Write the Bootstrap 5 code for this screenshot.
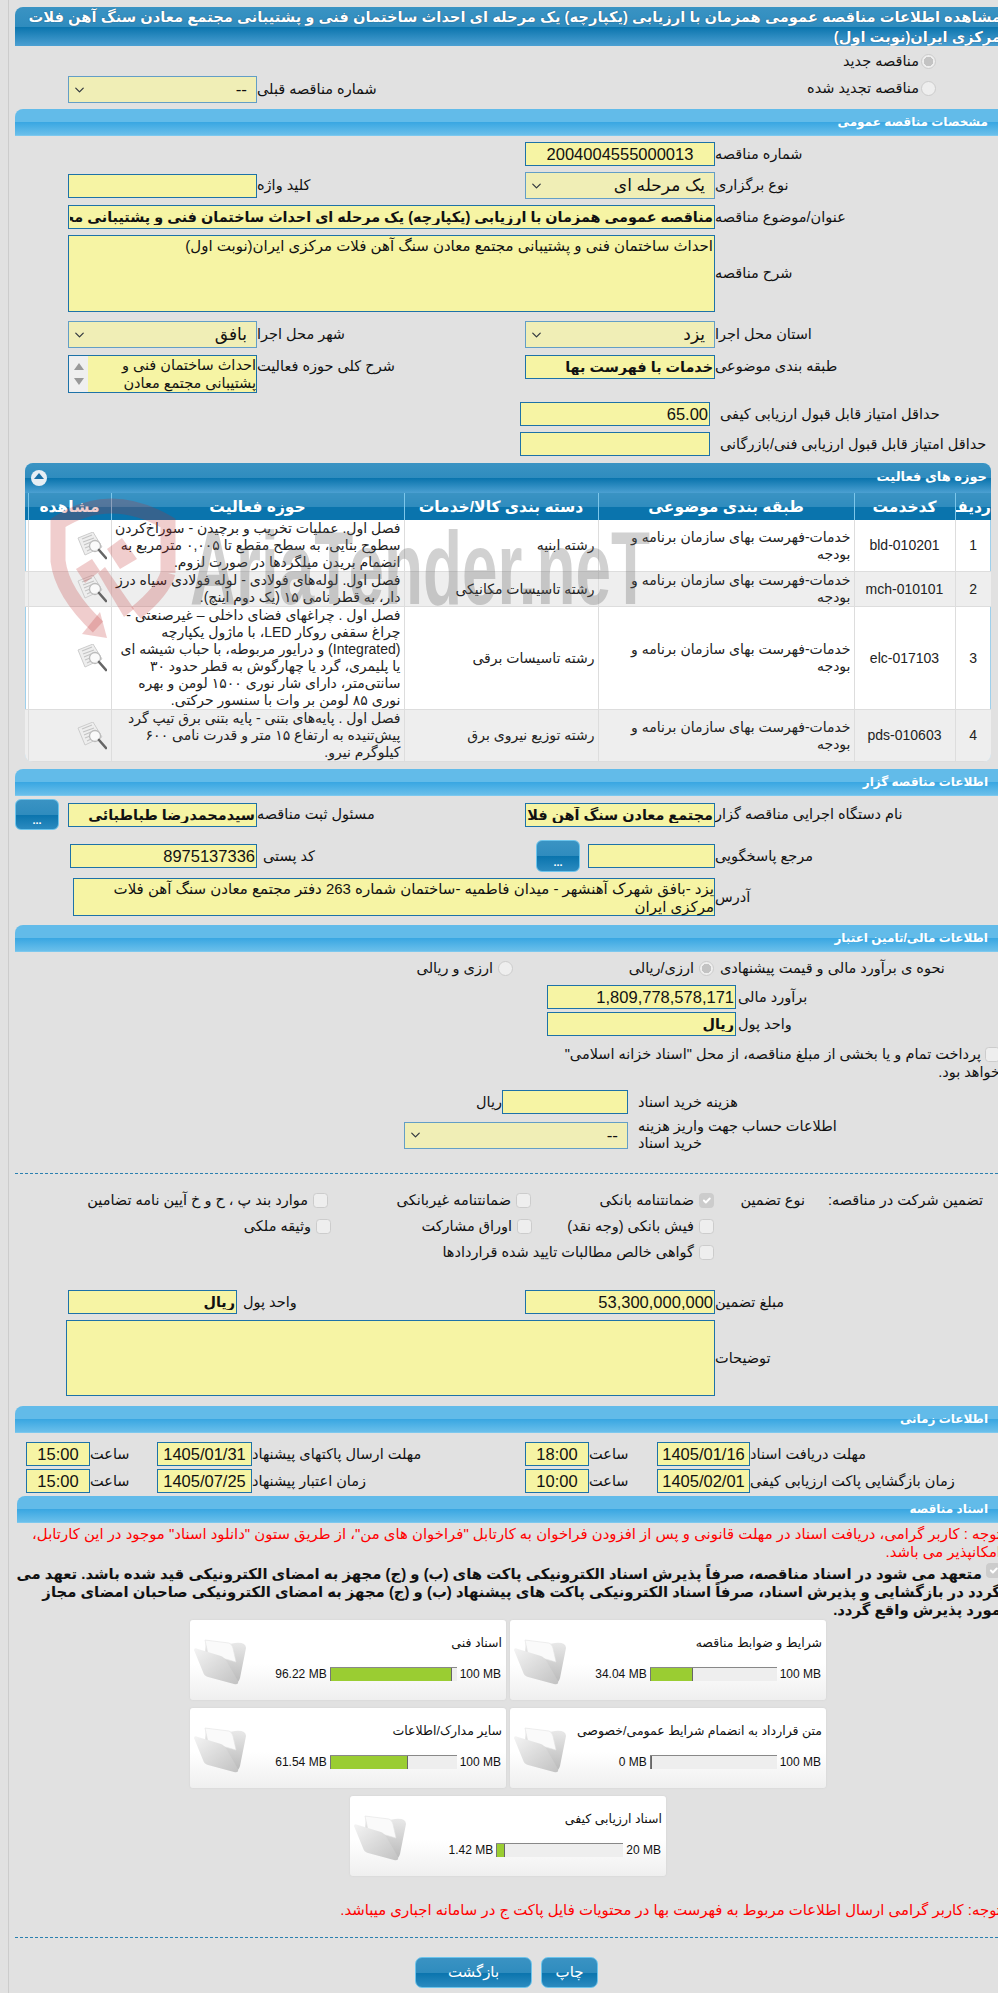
<!DOCTYPE html>
<html lang="fa" dir="rtl">
<head>
<meta charset="utf-8">
<title>مشاهده اطلاعات مناقصه</title>
<link rel="stylesheet" href="https://cdn.jsdelivr.net/npm/bootstrap@5.3.0/dist/css/bootstrap.min.css">
<style>
html{overflow:hidden}
body{background:#e1e1e1 linear-gradient(to right,#e1e1e1 8px,#ccc 8px,#ccc 9px,#e1e1e1 9px);font-family:"Liberation Sans","DejaVu Sans",sans-serif;font-size:14.5px;line-height:17px;color:#111;padding:7px 0 0 15px;margin:0;width:998px;height:1993px;overflow:hidden}
.hd-main{height:39px;background:linear-gradient(#3a93c3 0,#2f8cbe 50%,#0a74ad 51%,#4ca0d2 100%);border-radius:8px 0 0 0;color:#fff;font-size:14.7px;line-height:20px;font-weight:bold;margin-right:-3px;overflow:hidden;text-shadow:0 0 1px #135}
.hd-sec{height:27px;background:linear-gradient(#62bbe9 0,#62bbe9 48%,#3aa7e2 50%,#6ec1eb 100%);border-radius:8px 0 0 0;color:#fff;font-size:12px;font-weight:bold;line-height:27px;padding-right:10px;box-shadow:inset 0 -1px 0 #7cc8ee}
.g{display:grid;grid-template-columns:283px 190px 268px 189px;align-items:center}
.lb{text-align:left}
.fld.form-control,.fsel.form-select{border-radius:0;box-shadow:none;font-family:"Liberation Sans","DejaVu Sans",sans-serif;color:#111}
.fld.form-control{height:24px;min-height:0;padding:0 1px;background:#f6f4a4;border:1px solid #1d72a8;font-size:16.5px;line-height:20px}
.fsel.form-select{height:27px;padding:0 9px 0 22px;background-color:#f0eeb6;background-position:left 4px center;background-size:13px 10px;border:1px solid #639ec6;font-size:17px;opacity:1}
.fld.bd{font-weight:bold;font-size:14.4px}
.ctr{text-align:center}
.num{text-align:right}
.fld.ar{height:auto;resize:none;font-size:15px;padding:1px;line-height:18px}
.chk{width:15px;height:15px;margin:0;flex:none;background-color:#eee;border:1px solid #ccc;opacity:1!important;border-radius:4px}
.chk[type=radio]{border-radius:50%}
.chk:checked{background-color:#ccc;border-color:#ccc}
.chk[type=radio]:checked{background:radial-gradient(circle,#c3c3c3 0 4.5px,#eee 5px)}
.ck{display:inline-flex;align-items:center;gap:5px}
.ck2{gap:2px}
.panel{position:relative;width:966px;margin-right:7px;border-radius:8px;overflow:hidden;box-shadow:0 0 0 1px #9ed0ec inset;background:#fff}
.panel-hd{height:30px;background:linear-gradient(#3a93c3 0,#2f8cbe 50%,#0a74ad 51%,#4ca0d2 100%);color:#fff;font-weight:bold;font-size:13px;line-height:28px;padding-right:4px;position:relative}
.tg{position:absolute;left:6px;top:7px;width:16px;height:16px;border-radius:50%;background:#e6eef4}
.tg::after{content:"";position:absolute;left:3px;top:3px;border:5px solid transparent;border-bottom:6px solid #1a6fa6;border-top:0}
.tb.table{margin:0;table-layout:fixed;width:966px;font-size:14px;line-height:17px;--bs-table-bg:transparent;color:#111}
.tb th{height:27px;padding:0;border:0;border-left:1px solid #7cc6ea;background:linear-gradient(#3a93c3 0,#2f8cbe 50%,#0a74ad 51%,#0a74ad 100%);color:#fff;text-align:center;font-size:15.5px;font-weight:bold;vertical-align:middle;white-space:nowrap;overflow:hidden}
.tb th:last-child{border-left:0}
.tb td{padding:0 3px;border:0;border-left:1px solid #ddd;border-bottom:1px solid #ddd;vertical-align:middle;text-align:right;color:#222}
.tb td:last-child{border-left:0}
.tb td.ltr{text-align:center}
.tb tr.alt td{background:#eee}
.tb td.ic{padding:0 4px 0 0}
.wm{position:absolute;left:0;top:0;width:640px;height:180px;pointer-events:none;overflow:visible}
.dbtn{display:flex;align-items:flex-end;justify-content:center;width:44px;height:31px;padding:0 0 3px;border-radius:6px;border:1px solid #6cc4ec;background:linear-gradient(#3a93c3 0,#2f8cbe 50%,#0a74ad 51%,#2b8bc0 100%);color:#fff;font-size:11px;font-weight:bold;line-height:12px}
.addr{height:38px;background:#f6f4a4;border:1px solid #1d72a8;font-size:15px;line-height:18px;padding:1px 0 0 20px}
.lst{height:38px;background:#f6f4a4;border:1px solid #1d72a8;display:flex;overflow:hidden;font-size:14.5px;line-height:18px}
.lst-t{flex:1;padding-left:12px}
.lst-b{width:19px;background:#efefef;display:flex;flex-direction:column;justify-content:space-between;align-items:center;padding:7px 0}
.lst-b i{display:block;border:5px solid transparent;border-bottom:7px solid #999;border-top:0}
.lst-b i+i{border-bottom:0;border-top:7px solid #999}
.tm{display:grid;grid-template-columns:248px 93px 68px 64px 273px 95px 67px 64px;align-items:center}
.gr{display:grid;grid-template-columns:193px 91px 183px 203px 1fr;align-items:center}
.gr2{grid-template-columns:193px 91px 182px 201px 1fr}
.pr15{padding-right:15px}
.fin1{display:grid;grid-template-columns:284px 201px 1fr;align-items:center}
.fin2{display:grid;grid-template-columns:262px 189px;align-items:center}
.fin3{display:grid;grid-template-columns:370px 126px auto;align-items:center;justify-content:start}
.fin4{display:grid;grid-template-columns:370px 224px;align-items:center}
.pl10{padding-left:10px}
.fin4 .nar{justify-self:end;width:210px;text-align:left;margin-left:10px}
.tres{width:458px;margin-right:-2px;line-height:18px}
.tres input{display:inline-block;vertical-align:-3px}
.dash{border-top:1px dashed #2a80b0}
.red{color:#f00;font-size:14.9px;line-height:18px;margin-right:-3px}
.strong{font-weight:bold;font-size:14.85px;line-height:18px;color:#111;margin-right:-3px;margin-top:2px}
.strong input{display:inline-block;vertical-align:1px}
.sec2{margin-left:2px}
.dcards{display:flex;flex-wrap:wrap;justify-content:center;gap:8px 4px;width:640px;margin:1px 170px 0 0}
.dcard{display:flex;width:316px;height:80px;background:linear-gradient(#fff 0,#fff 55%,#efefef 100%);border-radius:3px;box-shadow:0 0 2px #ccc;padding:15px 4px 0 4px}
.dc-m{flex:1}
.dc-t{font-size:12.5px;line-height:17px;height:17px}
.dc-b{display:flex;align-items:center;gap:3px;margin-top:15px;font-size:12px;line-height:14px;padding-right:1px}
.dc-bar{display:block;width:127px;height:14px;background:#eee;border-top:1px solid #888;overflow:hidden;direction:ltr}
.dc-fill{display:block;height:100%;background:#9acd32;border-left:1px solid #777;border-right:1px solid #666}
.dc-f{width:52px;height:47px;margin:3px 0 0 0;flex:none}
.rbtn{display:inline-flex;align-items:center;justify-content:center;height:31px;border-radius:7px;border:1px solid #6cc4ec;background:linear-gradient(#3a93c3 0,#2f8cbe 50%,#0a74ad 51%,#2b8bc0 100%);color:#fff;font-size:15px;padding:0}
.w57{width:57px}.w117{width:117px}
.btns{display:flex;justify-content:center;gap:9px;margin:19px 0 0 0;width:983px}
.t2{margin-top:2px}.t3{margin-top:3px}.t4{margin-top:4px}.t6{margin-top:6px}.t7{margin-top:7px}.t8{margin-top:8px}.t9{margin-top:9px}.t10{margin-top:10px}.t18{margin-top:18px}.t21{margin-top:21px}
.col24{align-self:start}
.lb.col24{padding-top:3px}
.rd-row{height:30px;display:flex;align-items:center;padding-right:62px}
.rd2{padding-right:62px}
</style>
</head>
<body>
<svg width="0" height="0" class="position-absolute">
<defs>
<linearGradient id="fg1" x1="0" y1="0" x2="0" y2="1"><stop offset="0" stop-color="#ececec"/><stop offset="1" stop-color="#b9b9b9"/></linearGradient>
<linearGradient id="fg2" x1="0" y1="0" x2="1" y2="1"><stop offset="0" stop-color="#f4f4f4"/><stop offset="1" stop-color="#c2c2c2"/></linearGradient>
<symbol id="ic-folder" viewBox="0 0 52 47">
<path d="M12 2 L30 7 L41 5 Q52 4 52 10 L46 40 Q44 47 38 44 L10 30Z" fill="url(#fg1)"/>
<path d="M11 2 L35 5 Q38 6 39 10 L42 24 L14 16Z" fill="#fafafa" stroke="#e2e2e2" stroke-width=".6"/>
<path d="M0 12 Q0 9 4 11 L27 18 Q30 19 33 24 L44 43 Q45 47 40 46 L14 39 Q10 38 9 34Z" fill="url(#fg2)"/>
</symbol>
<symbol id="ic-view" viewBox="0 0 30 28">
<path d="M1 6 L16 0 L25 15 L8 23Z" fill="#eee" stroke="#ccc"/>
<path d="M5 7 L15 3 M6 10 L17 6 M7 13 L14 10 M8 16 L13 14 M10 19 L14 17" stroke="#c4c4c4" stroke-width="1.1"/>
<circle cx="18" cy="14" r="5.5" fill="#fdfdfd" fill-opacity=".75" stroke="#bbb" stroke-width="1.3"/>
<path d="M22 18 L29 26" stroke="#666" stroke-width="2.6" stroke-linecap="round"/>
</symbol>
</defs>
</svg>

<div class="hd-main">مشاهده اطلاعات مناقصه عمومی همزمان با ارزیابی (یکپارچه) یک مرحله ای احداث ساختمان فنی و پشتیبانی مجتمع معادن سنگ آهن فلات مرکزی ایران(نوبت اول)</div>

<div class="rd-row"><label class="ck ck2"><input class="form-check-input chk" type="radio" checked disabled>مناقصه جدید</label></div>
<div class="g">
  <div class="rd2" style="grid-column:1/3"><label class="ck ck2"><input class="form-check-input chk" type="radio" disabled>مناقصه تجدید شده</label></div>
  <div class="lb">شماره مناقصه قبلی</div>
  <select class="form-select fsel" disabled><option>--</option></select>
</div>

<div class="hd-sec t6">مشخصات مناقصه عمومی</div>
<div class="g t6">
  <div class="lb">شماره مناقصه</div>
  <input class="form-control fld ctr" value="2004004555000013" readonly>
</div>
<div class="g t6">
  <div class="lb">نوع برگزاری</div>
  <select class="form-select fsel" disabled><option>یک مرحله ای</option></select>
  <div class="lb">کلید واژه</div>
  <input class="form-control fld" readonly>
</div>
<div class="g t6">
  <div class="lb">عنوان/موضوع مناقصه</div>
  <input class="form-control fld bd" style="grid-column:2/5" value="مناقصه عمومی همزمان با ارزیابی (یکپارچه) یک مرحله ای احداث ساختمان فنی و پشتیبانی مجتمع معادن سنگ آهن فلات مرکزی ایران(نوبت اول)" readonly>
</div>
<div class="g t6">
  <div class="lb">شرح مناقصه</div>
  <textarea class="form-control fld ar" style="grid-column:2/5;height:77px" rows="4" readonly>احداث ساختمان فنی و پشتیبانی مجتمع معادن سنگ آهن فلات مرکزی ایران(نوبت اول)</textarea>
</div>
<div class="g t9">
  <div class="lb">استان محل اجرا</div>
  <select class="form-select fsel" disabled><option>یزد</option></select>
  <div class="lb">شهر محل اجرا</div>
  <select class="form-select fsel" disabled><option>بافق</option></select>
</div>
<div class="g t7">
  <div class="lb col24">طبقه بندی موضوعی</div>
  <input class="form-control fld bd col24" value="خدمات با فهرست بها" readonly>
  <div class="lb col24">شرح کلی حوزه فعالیت</div>
  <div class="lst"><div class="lst-t">احداث ساختمان فنی و پشتیبانی مجتمع معادن سنگ آهن فلات مرکزی ایران</div><div class="lst-b"><i></i><i></i></div></div>
</div>
<div class="g t9" style="grid-template-columns:288px 190px">
  <div class="lb" style="padding-left:10px">حداقل امتیاز قابل قبول ارزیابی کیفی</div>
  <input class="form-control fld num" value="65.00" readonly>
</div>
<div class="g t6" style="grid-template-columns:288px 190px">
  <div class="lb" style="padding-left:10px">حداقل امتیاز قابل قبول ارزیابی فنی/بازرگانی</div>
  <input class="form-control fld" readonly>
</div>

<div class="panel t7">
  <div class="panel-hd">حوزه های فعالیت<span class="tg"></span></div>
  <table class="table tb">
    <colgroup><col style="width:36px"><col style="width:101px"><col style="width:256px"><col style="width:194px"><col style="width:293px"><col style="width:83px"><col style="width:3px"></colgroup>
    <thead><tr><th>ردیف</th><th>کدخدمت</th><th>طبقه بندی موضوعی</th><th>دسته بندی کالا/خدمات</th><th>حوزه فعالیت</th><th>مشاهده</th><th></th></tr></thead>
    <tbody>
    <tr><td class="ltr">1</td><td class="ltr">bld-010201</td><td>خدمات-فهرست بهای سازمان برنامه و بودجه</td><td>رشته ابنیه</td><td>فصل اول. عملیات تخریب و برچیدن - سوراخ‌کردن سطوح بنایی، به سطح مقطع تا ۰,۰۰۵ مترمربع به انضمام بریدن میلگردها در صورت لزوم.</td><td class="ic"><svg width="30" height="28"><use href="#ic-view"/></svg></td><td></td></tr>
    <tr class="alt"><td class="ltr">2</td><td class="ltr">mch-010101</td><td>خدمات-فهرست بهای سازمان برنامه و بودجه</td><td>رشته تاسیسات مکانیکی</td><td>فصل اول. لوله‌های فولادی - لوله فولادی سیاه درز دار، به قطر نامی ۱۵ (یک دوم اینچ).</td><td class="ic"><svg width="30" height="28"><use href="#ic-view"/></svg></td><td></td></tr>
    <tr><td class="ltr">3</td><td class="ltr">elc-017103</td><td>خدمات-فهرست بهای سازمان برنامه و بودجه</td><td>رشته تاسیسات برقی</td><td>فصل اول . چراغهای فضای داخلی – غیرصنعتی - چراغ سقفی روکار LED، با ماژول یکپارچه (Integrated) و درایور مربوطه، با حباب شیشه ای یا پلیمری، گرد یا چهارگوش به قطر حدود ۳۰ سانتی‌متر، دارای شار نوری ۱۵۰۰ لومن و بهره نوری ۸۵ لومن بر وات با سنسور حرکتی.</td><td class="ic"><svg width="30" height="28"><use href="#ic-view"/></svg></td><td></td></tr>
    <tr class="alt"><td class="ltr">4</td><td class="ltr">pds-010603</td><td>خدمات-فهرست بهای سازمان برنامه و بودجه</td><td>رشته توزیع نیروی برق</td><td>فصل اول . پایه‌های بتنی - پایه بتنی برق تیپ گرد پیش‌تنیده به ارتفاع ۱۵ متر و قدرت نامی ۶۰۰ کیلوگرم نیرو.</td><td class="ic"><svg width="30" height="28"><use href="#ic-view"/></svg></td><td></td></tr>
    </tbody>
  </table>
  <svg class="wm" viewBox="25 462 640 180">
    <g fill="#c03030" fill-opacity=".24">
      <path d="M168 572 L168 522 Q110 488 58 522 L58 560 Q62 592 98 626 M168 572 Q163 590 136 612" fill="none" stroke="#c03030" stroke-opacity=".24" stroke-width="15"/>
      <path d="M107 637 L82 633 L100 611Z"/>
      <path d="M76 568 L92 558 L100 570 L85 582Z"/>
      <path d="M107 548 L122 537 L137 558 L120 568Z"/>
      <path d="M98 572 L105 566 L134 608 L124 616Z"/>
    </g>
    <text x="190" y="603" dir="ltr" font-family="Liberation Sans" font-weight="bold" font-size="104" textLength="460" lengthAdjust="spacingAndGlyphs" fill="#666" fill-opacity=".3" style="direction:ltr;unicode-bidi:bidi-override">AriaTender.neT</text>
  </svg>
</div>

<div class="hd-sec t7">اطلاعات مناقصه گزار</div>
<div class="g" style="grid-template-columns:283px 190px 268px 189px 9px 44px;height:37px">
  <div class="lb">نام دستگاه اجرایی مناقصه گزار</div>
  <input class="form-control fld bd" value="مجتمع معادن سنگ آهن فلات مرکزی ایران" readonly>
  <div class="lb">مسئول ثبت مناقصه</div>
  <input class="form-control fld bd" value="سیدمحمدرضا طباطبائی" readonly>
  <div></div>
  <button class="dbtn btn" type="button">...</button>
</div>
<div class="g t7" style="grid-template-columns:283px 127px 8px 44px 11px 268px 187px">
  <div class="lb">مرجع پاسخگویی</div>
  <input class="form-control fld" readonly>
  <div></div>
  <button class="dbtn btn" style="height:32px" type="button">...</button>
  <div></div>
  <div class="lb" style="padding-left:6px">کد پستی</div>
  <input class="form-control fld num" value="8975137336" readonly>
</div>
<div class="g t6" style="grid-template-columns:283px 642px">
  <div class="lb">آدرس</div>
  <div class="addr">یزد -بافق شهرک آهنشهر - میدان فاطمیه -ساختمان شماره 263 دفتر مجتمع معادن سنگ آهن فلات مرکزی ایران</div>
</div>

<div class="hd-sec t9">اطلاعات مالی/تامین اعتبار</div>
<div class="fin1 t8">
  <div class="lb" style="padding-left:6px">نحوه ی برآورد مالی و قیمت پیشنهادی</div>
  <label class="ck"><input class="form-check-input chk" type="radio" checked disabled>ارزی/ریالی</label>
  <label class="ck"><input class="form-check-input chk" type="radio" disabled>ارزی و ریالی</label>
</div>
<div class="fin2 t8">
  <div class="lb" style="padding-left:2px">برآورد مالی</div>
  <input class="form-control fld num" value="1,809,778,578,171" readonly>
</div>
<div class="fin2 t3">
  <div class="lb" style="padding-left:2px">واحد پول</div>
  <input class="form-control fld bd" value="ریال" readonly>
</div>
<div class="tres t9"><input class="form-check-input chk" type="checkbox" disabled> پرداخت تمام و یا بخشی از مبلغ مناقصه، از محل "اسناد خزانه اسلامی" خواهد بود.</div>
<div class="fin3 t9">
  <div class="lb pl10">هزینه خرید اسناد</div>
  <input class="form-control fld" readonly>
  <div>ریال</div>
</div>
<div class="fin4 t4">
  <div class="nar">اطلاعات حساب جهت واریز هزینه خرید اسناد</div>
  <select class="form-select fsel" disabled><option>--</option></select>
</div>

<div class="dash t21"></div>

<div class="gr t18">
  <div class="pr15">تضمین شرکت در مناقصه:</div>
  <div>نوع تضمین</div>
  <label class="ck"><input class="form-check-input chk" type="checkbox" checked disabled>ضمانتنامه بانکی</label>
  <label class="ck"><input class="form-check-input chk" type="checkbox" disabled>ضمانتنامه غیربانکی</label>
  <label class="ck"><input class="form-check-input chk" type="checkbox" disabled>موارد بند پ ، ح و خ آیین نامه تضامین</label>
</div>
<div class="gr gr2 t9">
  <div></div><div></div>
  <label class="ck"><input class="form-check-input chk" type="checkbox" disabled>فیش بانکی (وجه نقد)</label>
  <label class="ck"><input class="form-check-input chk" type="checkbox" disabled>اوراق مشارکت</label>
  <label class="ck"><input class="form-check-input chk" type="checkbox" disabled>وثیقه ملکی</label>
</div>
<div class="gr t9">
  <div></div><div></div>
  <label class="ck" style="grid-column:3/6"><input class="form-check-input chk" type="checkbox" disabled>گواهی خالص مطالبات تایید شده قراردادها</label>
</div>

<div class="g" style="margin-top:29px;grid-template-columns:283px 190px 288px 169px">
  <div class="lb">مبلغ تضمین</div>
  <input class="form-control fld num" value="53,300,000,000" readonly>
  <div class="lb" style="padding-left:6px">واحد پول</div>
  <input class="form-control fld bd" value="ریال" readonly>
</div>
<div class="g t6" style="grid-template-columns:283px 649px">
  <div class="lb">توضیحات</div>
  <textarea class="form-control fld ar" style="height:76px" rows="4" readonly></textarea>
</div>

<div class="hd-sec t10">اطلاعات زمانی</div>
<div class="tm t9">
  <div class="lb">مهلت دریافت اسناد</div><input class="form-control fld ctr" value="1405/01/16" readonly><div class="lb">ساعت</div><input class="form-control fld ctr" value="18:00" readonly>
  <div class="lb">مهلت ارسال پاکتهای پیشنهاد</div><input class="form-control fld ctr" value="1405/01/31" readonly><div class="lb">ساعت</div><input class="form-control fld ctr" value="15:00" readonly>
</div>
<div class="tm t3">
  <div class="lb">زمان بازگشایی پاکت ارزیابی کیفی</div><input class="form-control fld ctr" value="1405/02/01" readonly><div class="lb">ساعت</div><input class="form-control fld ctr" value="10:00" readonly>
  <div class="lb">زمان اعتبار پیشنهاد</div><input class="form-control fld ctr" value="1405/07/25" readonly><div class="lb">ساعت</div><input class="form-control fld ctr" value="15:00" readonly>
</div>

<div class="hd-sec t3 sec2">اسناد مناقصه</div>
<div class="red t2">توجه : کاربر گرامی، دریافت اسناد در مهلت قانونی و پس از افزودن فراخوان به کارتابل "فراخوان های من"، از طریق ستون "دانلود اسناد" موجود در این کارتابل، امکانپذیر می باشد.</div>
<div class="strong"><input class="form-check-input chk" type="checkbox" checked disabled> متعهد می شود در اسناد مناقصه، صرفاً پذیرش اسناد الکترونیکی پاکت های (ب) و (ج) مجهز به امضای الکترونیکی قید شده باشد. تعهد می گردد در بازگشایی و پذیرش اسناد، صرفاً اسناد الکترونیکی پاکت های پیشنهاد (ب) و (ج) مجهز به امضای الکترونیکی صاحبان امضای مجاز مورد پذیرش واقع گردد.</div>

<div class="dcards">
  <div class="dcard"><div class="dc-m"><div class="dc-t">شرایط و ضوابط مناقصه</div><div class="dc-b"><span dir="ltr">100 MB</span><span class="dc-bar"><span class="dc-fill" style="width:34.04%"></span></span><span dir="ltr">34.04 MB</span></div></div><svg class="dc-f"><use href="#ic-folder"/></svg></div>
  <div class="dcard"><div class="dc-m"><div class="dc-t">اسناد فنی</div><div class="dc-b"><span dir="ltr">100 MB</span><span class="dc-bar"><span class="dc-fill" style="width:96.22%"></span></span><span dir="ltr">96.22 MB</span></div></div><svg class="dc-f"><use href="#ic-folder"/></svg></div>
  <div class="dcard"><div class="dc-m"><div class="dc-t">متن قرارداد به انضمام شرایط عمومی/خصوصی</div><div class="dc-b"><span dir="ltr">100 MB</span><span class="dc-bar"><span class="dc-fill" style="width:0"></span></span><span dir="ltr">0 MB</span></div></div><svg class="dc-f"><use href="#ic-folder"/></svg></div>
  <div class="dcard"><div class="dc-m"><div class="dc-t">سایر مدارک/اطلاعات</div><div class="dc-b"><span dir="ltr">100 MB</span><span class="dc-bar"><span class="dc-fill" style="width:61.54%"></span></span><span dir="ltr">61.54 MB</span></div></div><svg class="dc-f"><use href="#ic-folder"/></svg></div>
  <div class="dcard"><div class="dc-m"><div class="dc-t">اسناد ارزیابی کیفی</div><div class="dc-b"><span dir="ltr">20 MB</span><span class="dc-bar"><span class="dc-fill" style="width:7.1%"></span></span><span dir="ltr">1.42 MB</span></div></div><svg class="dc-f"><use href="#ic-folder"/></svg></div>
</div>

<div class="red" style="margin-top:25px">توجه: کاربر گرامی ارسال اطلاعات مربوط به فهرست بها در محتویات فایل پاکت ج در سامانه اجباری میباشد.</div>
<div class="dash t18"></div>
<div class="btns"><button class="rbtn btn w57" type="button">چاپ</button><button class="rbtn btn w117" type="button">بازگشت</button></div>
<script src="https://cdn.jsdelivr.net/npm/bootstrap@5.3.0/dist/js/bootstrap.bundle.min.js"></script>
</body>
</html>
